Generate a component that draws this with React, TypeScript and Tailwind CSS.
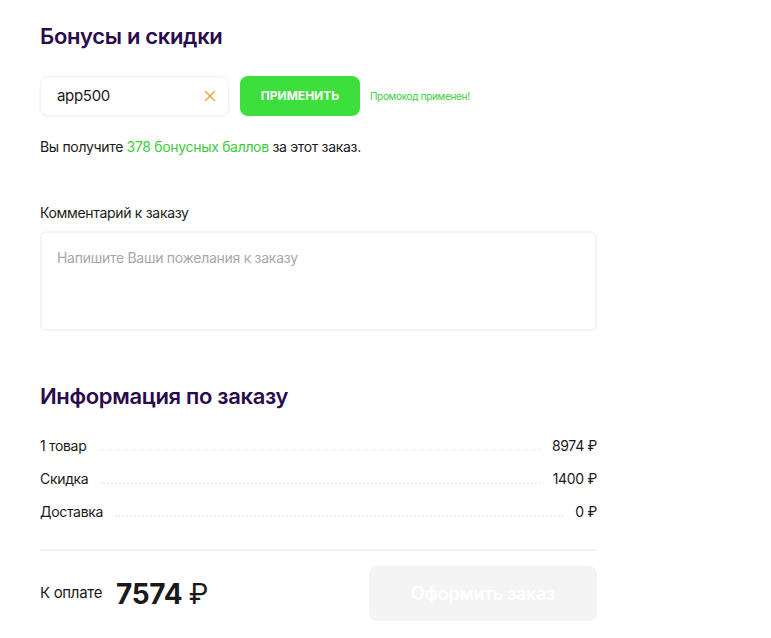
import React from "react";

const rows = [
  { label: "1 товар", value: "8974 ₽" },
  { label: "Скидка", value: "1400 ₽" },
  { label: "Доставка", value: "0 ₽" },
];

export default function App() {
  return (
    <div className="min-h-[638px] bg-white font-['Inter',sans-serif] tracking-[-0.02em] text-[#1a1a1a]">
      <div className="w-[557px] ml-10 pt-[22px]">
        <h2 className="text-[22px] font-semibold leading-7 tracking-[-0.015em] text-[#2a0b4c]">
          Бонусы и скидки
        </h2>

        <div className="flex items-center mt-[26px]">
          <div className="flex items-center w-[189px] h-10 rounded-lg border border-[#f1f1f1] shadow-[0_1px_3px_rgba(0,0,0,0.05)] pl-4 pr-3">
            <span className="flex-1 text-[15px]">app500</span>
            <svg width="12" height="12" viewBox="0 0 12 12" fill="none">
              <path
                d="M1.5 1.5l9 9M10.5 1.5l-9 9"
                stroke="#f0a030"
                strokeWidth="1.4"
                strokeLinecap="round"
              />
            </svg>
          </div>
          <button className="ml-[11px] w-[120px] h-10 rounded-lg bg-[#3ddf3d] text-white text-[12px] font-bold uppercase tracking-normal">
            Применить
          </button>
          <span className="ml-[10px] text-[10px] text-[#3ccc3c]">
            Промокод применен!
          </span>
        </div>

        <p className="mt-5 text-[14px]">
          Вы получите <span className="text-[#3ccc3c]">378 бонусных баллов</span>{" "}
          за этот заказ.
        </p>

        <label className="block mt-[45px] text-[14px]">Комментарий к заказу</label>
        <textarea
          className="mt-2 block w-full h-[100px] resize-none rounded-md border-2 border-[#f4f4f4] px-[15px] pt-[14px] text-[14px] tracking-[-0.02em] placeholder:text-[#a8a8a8] outline-none"
          placeholder="Напишите Ваши пожелания к заказу"
        />

        <h2 className="mt-[51px] text-[22px] font-semibold leading-7 tracking-[-0.015em] text-[#2a0b4c]">
          Информация по заказу
        </h2>

        <div className="mt-[26px] flex flex-col gap-[13px]">
          {rows.map((r) => (
            <div key={r.label} className="flex items-end h-5 text-[14px]">
              <span>{r.label}</span>
              <span className="flex-1 mx-3 mb-[5px] border-b-2 border-dotted border-[#f0f0f0]" />
              <span>{r.value}</span>
            </div>
          ))}
        </div>

        <div className="mt-[27px] h-[2px] bg-[#f3f3f3]" />

        <div className="flex items-center justify-between mt-[15px]">
          <div className="flex items-center">
            <span className="text-[15px]">К оплате</span>
            <span className="ml-[14px] text-[28px] font-bold">
              7574 <span className="font-normal">₽</span>
            </span>
          </div>
          <button className="w-[228px] h-[55px] rounded-lg bg-[#f4f4f4] text-white text-[18px] font-semibold">
            Оформить заказ
          </button>
        </div>
      </div>
    </div>
  );
}
